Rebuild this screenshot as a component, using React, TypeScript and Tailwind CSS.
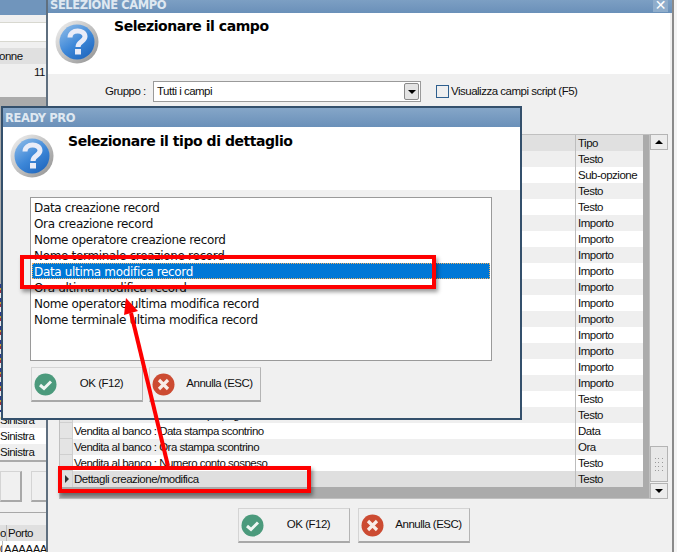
const tipi = [
  'Testo', 'Sub-opzione', 'Testo', 'Testo', 'Importo', 'Importo', 'Importo', 'Importo', 'Importo', 'Importo',
  'Importo', 'Importo', 'Importo', 'Importo', 'Importo', 'Testo', 'Testo', 'Data', 'Ora', 'Testo',
];

const campi: Record<number, string> = {
  15: 'Vendita al banco : Data stampa pagato',
  16: 'Vendita al banco : Data stampa pagato',
  17: 'Vendita al banco : Data stampa scontrino',
  18: 'Vendita al banco : Ora stampa scontrino',
  19: 'Vendita al banco : Numero conto sospeso',
};

const dettagli = [
  'Data creazione record',
  'Ora creazione record',
  'Nome operatore creazione record',
  'Nome terminale creazione record',
  'Data ultima modifica record',
  'Ora ultima modifica record',
  'Nome operatore ultima modifica record',
  'Nome terminale ultima modifica record',
];

const dejavu = { fontFamily: '"DejaVu Sans", sans-serif' };

function QuestionIcon({ id }: { id: string }) {
  return (
    <svg width="44" height="44" viewBox="0 0 44 44" className="shrink-0">
      <defs>
        <linearGradient id={`${id}-ring`} x1="0" y1="0" x2="1" y2="1">
          <stop offset="0%" stopColor="#f4f4f4" />
          <stop offset="100%" stopColor="#8f8f8f" />
        </linearGradient>
        <linearGradient id={`${id}-ball`} x1="0.1" y1="0" x2="0.8" y2="1">
          <stop offset="0%" stopColor="#8dbbe8" />
          <stop offset="55%" stopColor="#3d87d8" />
          <stop offset="100%" stopColor="#1f66bd" />
        </linearGradient>
      </defs>
      <circle cx="22" cy="22" r="21.5" fill={`url(#${id}-ring)`} />
      <circle cx="22" cy="22" r="17.5" fill={`url(#${id}-ball)`} />
      <path
        d="M15 17.5 C15 9 30 9 30 16.5 C30 21.5 23 21.5 23 27"
        fill="none"
        stroke="#e9ecf8"
        strokeWidth="5"
      />
      <rect x="20" y="29" width="6" height="5.5" fill="#e9ecf8" />
    </svg>
  );
}

function OkIcon() {
  return (
    <svg width="23" height="23" viewBox="0 0 23 23" className="shrink-0">
      <circle cx="11.5" cy="11.5" r="11" fill="#4b9a7c" />
      <path d="M6 12 L10 15.5 L17 8.5" fill="none" stroke="#eef6f2" strokeWidth="3" />
    </svg>
  );
}

function CancelIcon() {
  return (
    <svg width="23" height="23" viewBox="0 0 23 23" className="shrink-0">
      <circle cx="11.5" cy="11.5" r="11" fill="#cc4b32" />
      <path d="M7 7 L16 16 M16 7 L7 16" fill="none" stroke="#f8ece8" strokeWidth="3.2" />
    </svg>
  );
}

function DialogButton({ kind }: { kind: 'ok' | 'cancel' }) {
  return (
    <div className="flex h-[35px] w-[112px] items-center border border-[#d4d4d4] border-r-[#b4b4b4] border-b-2 border-b-[#a8a8a8] bg-[#f0f0f0] pl-[2px]">
      {kind === 'ok' ? <OkIcon /> : <CancelIcon />}
      <span className="flex-1 whitespace-nowrap pl-[4px] text-center">
        {kind === 'ok' ? 'OK (F12)' : 'Annulla (ESC)'}
      </span>
    </div>
  );
}

function TitleBar({ title, className = '', children }: { title: string; className?: string; children?: React.ReactNode }) {
  return (
    <div
      className={`flex h-[19px] shrink-0 items-center justify-between bg-gradient-to-b from-[#85a6c8] to-[#6a90b9] pl-[2px] pr-[3px] text-[11.5px] font-bold leading-none tracking-[-0.4px] text-[#dfe8f1] ${className}`}
      style={dejavu}
    >
      <span>{title}</span>
      {children}
    </div>
  );
}

function BackWindow() {
  return (
    <div className="absolute left-0 top-0 flex h-[552px] w-[47px] flex-col overflow-hidden bg-[#f0f0f0]">
      <div className="h-[15px] shrink-0 bg-[#7095bc]" />
      <div className="mt-[7px] h-[20px] shrink-0 border-y border-[#d8d8d0] bg-white" />
      <div className="mt-[6px] h-[16px] shrink-0 whitespace-nowrap bg-[#e0e0e0] leading-[16px]">
        <span className="ml-[-1px]">onne</span>
      </div>
      <div className="h-[16px] shrink-0 bg-[#efefef] pr-[2px] text-right leading-[16px]">11</div>
      <div className="h-[17px] shrink-0" />
      <div className="relative h-[315px] shrink-0 bg-[#ababab]">
        <div className="absolute bottom-0 left-0 h-[128px] w-px bg-[repeating-linear-gradient(180deg,#2b3a8c_0px,#2b3a8c_4px,#c8a030_4px,#c8a030_6px,#a03040_6px,#a03040_9px,#e8e8e8_9px,#e8e8e8_14px)]" />
      </div>
      <div className="h-[16px] shrink-0 bg-[#efefef] leading-[16px]">Sinistra</div>
      <div className="h-[16px] shrink-0 bg-white leading-[16px]">Sinistra</div>
      <div className="h-[16px] shrink-0 bg-[#efefef] leading-[16px]">Sinistra</div>
      <div className="h-[2px] shrink-0 bg-[#ababab]" />
      <div className="mt-[9px] flex h-[31px] shrink-0 gap-[9px]">
        <div className="w-[26px] border border-[#d4d4d4] border-b-2 border-r-2 border-b-[#a8a8a8] border-r-[#a8a8a8]" />
        <div className="w-[20px] border border-[#d4d4d4] border-b-2 border-b-[#a8a8a8]" />
      </div>
      <div className="mt-[10px] h-px shrink-0 bg-[#a8a8a8]" />
      <div className="mt-[12px] flex h-[16px] shrink-0 bg-[#e0e0e0] leading-[16px]">
        <span className="w-[7px] overflow-hidden border-r border-[#bdbdbd] text-right">o</span>
        <span className="pl-px">Porto</span>
      </div>
      <div className="flex h-[16px] shrink-0 bg-white leading-[16px]">
        <span className="w-[7px] overflow-hidden border-r border-[#bdbdbd] text-right">0</span>
        <span className="pl-px">AAAAAA</span>
      </div>
    </div>
  );
}

function CampoWindow() {
  return (
    <div className="absolute left-[46px] top-[-6px] flex h-[560px] w-[628px] flex-col border-x-2 border-l-[#5f6f7f] border-r-[#8a8a8a] bg-[#f0f0f0]">
      <TitleBar title="SELEZIONE CAMPO" className="pt-[5px]">
        <span className="mr-[1px] mt-[-3px] flex h-[14px] w-[15px] items-center justify-center bg-[#8fadcb] text-[14px] text-white">✕</span>
      </TitleBar>
      <div className="mr-[2px] flex h-[61px] shrink-0 gap-[15px] bg-white pl-[7px] pt-[7px]">
        <QuestionIcon id="campo" />
        <span className="mt-[-4px] whitespace-nowrap text-[14px] font-bold leading-[20px] tracking-[-0.45px] text-black" style={dejavu}>
          Selezionare il campo
        </span>
      </div>

      <div className="mt-[7px] flex h-[21px] shrink-0 items-center">
        <span className="ml-[57px] w-[48px] whitespace-nowrap">Gruppo :</span>
        <div className="flex h-[21px] w-[268px] items-center justify-between border border-[#9a9a9a] bg-white pl-[3px] pr-px">
          <span>Tutti i campi</span>
          <span className="flex h-[17px] w-[15px] items-center justify-center rounded-[2px] border border-[#8a8a8a] bg-[#e4e4e4]">
            <span className="border-x-[4px] border-t-[4px] border-x-transparent border-t-black" />
          </span>
        </div>
        <span className="ml-[15px] h-[13px] w-[13px] border border-[#2e5f8e] bg-[#efefef]" />
        <span className="ml-[2px] whitespace-nowrap">Visualizza campi script (F5)</span>
      </div>

      <div className="ml-[11px] mt-[32px] flex h-[365px] w-[610px] shrink-0">
        <div className="flex h-full w-[591px] flex-col border border-[#c0c0c0] bg-[#ababab]">
          <div className="flex h-[16px] w-[583px] shrink-0 bg-[#e0e0e0] leading-[16px]">
            <span className="w-[516px] border-r border-[#bdbdbd]" />
            <span className="pl-[2px]">Tipo</span>
          </div>
          {tipi.map((tipo, i) => (
            <div key={i} className={`flex h-[16px] w-[583px] shrink-0 leading-[16px] ${i % 2 ? 'bg-white' : 'bg-[#efefef]'}`}>
              <span className="w-[13px] shrink-0 border-b border-r border-[#cfcfcf] bg-[#e4e4e4]" />
              <span className="w-[503px] shrink-0 whitespace-nowrap border-r border-[#bdbdbd] pl-[1px]">{campi[i] ?? ''}</span>
              <span className="whitespace-nowrap pl-[2px]">{tipo}</span>
            </div>
          ))}
          <div className="flex h-[16px] w-[583px] shrink-0 bg-[#dfdfdf] leading-[16px]">
            <span className="flex w-[13px] shrink-0 items-center justify-center border-r border-[#cfcfcf]">
              <span className="ml-[2px] border-y-[4px] border-l-[4px] border-y-transparent border-l-[#303030]" />
            </span>
            <span className="w-[503px] shrink-0 whitespace-nowrap border-r border-[#bdbdbd] pl-[1px]">Dettagli creazione/modifica</span>
            <span className="pl-[2px]">Testo</span>
          </div>
        </div>
        <div className="flex w-[18px] flex-col justify-between bg-[#f0f0f0]">
          <span className="flex h-[16px] items-center justify-center border border-[#b4b4b4] bg-[#ececec]">
            <span className="border-x-[4px] border-b-[4px] border-x-transparent border-b-black" />
          </span>
          <div className="flex flex-col gap-[1px]">
            <span className="grid h-[36px] grid-cols-3 content-center justify-items-center gap-y-[3px] border border-[#b4b4b4] bg-[#e8e8e8] px-[3px]">
              {Array.from({ length: 12 }).map((_, i) => (
                <span key={i} className="h-px w-px bg-[#9a9a9a]" />
              ))}
            </span>
            <span className="flex h-[16px] items-center justify-center border border-[#b4b4b4] bg-[#ececec]">
              <span className="border-x-[4px] border-t-[4px] border-x-transparent border-t-black" />
            </span>
          </div>
        </div>
      </div>

      <div className="ml-[190px] mt-[9px] flex gap-[8px]">
        <DialogButton kind="ok" />
        <DialogButton kind="cancel" />
      </div>
    </div>
  );
}

function DettaglioDialog() {
  return (
    <div className="absolute left-[1px] top-[106px] flex h-[314px] w-[521px] flex-col border-2 border-[#34506c] bg-[#f0f0f0]">
      <TitleBar title="READY PRO" className="pt-[3px]" />
      <div className="flex h-[63px] shrink-0 gap-[14px] bg-white pl-[7px] pt-[7px]">
        <QuestionIcon id="dettaglio" />
        <span className="mt-[-3px] whitespace-nowrap text-[14px] font-bold leading-[20px] tracking-[-0.45px] text-black" style={dejavu}>
          Selezionare il tipo di dettaglio
        </span>
      </div>
      <div
        className="ml-[27px] mt-[7px] flex h-[164px] w-[462px] shrink-0 flex-col border border-[#9a9a9a] bg-white p-px text-[12px] tracking-[-0.33px]"
        style={dejavu}
      >
        {dettagli.map((d) => (
          <div
            key={d}
            className={`h-[16px] shrink-0 pl-[2px] leading-[18px] ${
              d === 'Data ultima modifica record' ? 'bg-[#0078d7] text-white outline-1 -outline-offset-1 outline-dotted outline-[#f0b060]' : ''
            }`}
          >
            {d}
          </div>
        ))}
      </div>
      <div className="ml-[28px] mt-[6px] flex gap-[6px]">
        <DialogButton kind="ok" />
        <DialogButton kind="cancel" />
      </div>
    </div>
  );
}

function Annotazioni() {
  return (
    <>
      <div className="absolute left-[20px] top-[255px] h-[34px] w-[416px] border-[4px] border-[#fe0000] shadow-[2px_3px_4px_rgba(0,0,0,0.4)]" />
      <div className="absolute left-[58px] top-[466px] h-[27px] w-[253px] border-[4px] border-[#fe0000] shadow-[2px_3px_4px_rgba(0,0,0,0.4)]" />
      <svg width="677" height="552" className="pointer-events-none absolute left-0 top-0">
        <path d="M168 466 L131 313" stroke="#fe0000" strokeWidth="4" />
        <path d="M126 298 L124 315 L138 311 Z" fill="#fe0000" />
      </svg>
    </>
  );
}

export default function App() {
  return (
    <div
      className="relative h-[552px] w-[677px] overflow-hidden bg-[#f4f4f4] text-[11.5px] tracking-[-0.5px] text-[#101010]"
      style={{ fontFamily: '"Liberation Sans", sans-serif' }}
    >
      <BackWindow />
      <CampoWindow />
      <DettaglioDialog />
      <Annotazioni />
    </div>
  );
}
